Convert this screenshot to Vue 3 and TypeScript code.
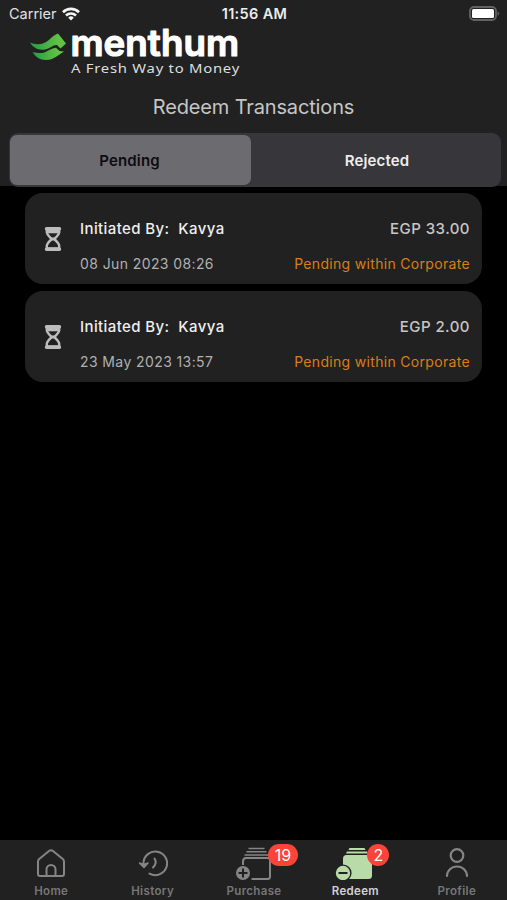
<script setup lang="ts">
import { ref } from 'vue'

interface Transaction {
  id: number
  initiatedBy: string
  date: string
  amount: string
  status: string
}

interface Tab {
  name: string
  badge?: number
}

const segments = ['Pending', 'Rejected']
const segment = ref('Pending')
const activeTab = ref('Redeem')

const transactions: Transaction[] = [
  { id: 1, initiatedBy: 'Kavya', date: '08 Jun 2023 08:26', amount: 'EGP 33.00', status: 'Pending within Corporate' },
  { id: 2, initiatedBy: 'Kavya', date: '23 May 2023 13:57', amount: 'EGP 2.00', status: 'Pending within Corporate' },
]

const tabs: Tab[] = [
  { name: 'Home' },
  { name: 'History' },
  { name: 'Purchase', badge: 19 },
  { name: 'Redeem', badge: 2 },
  { name: 'Profile' },
]
</script>

<template>
  <div class="screen">
    <header class="header">
      <div class="status">
        <div class="carrier">
          <span>Carrier</span>
          <svg class="wifi" width="18" height="14" viewBox="0 0 18 14">
            <g fill="none" stroke="#f4f4f4" stroke-width="2.6">
              <path d="M1 5.2a11.4 11.4 0 0 1 16 0" />
              <path d="M4 8.5a7.2 7.2 0 0 1 10 0" />
            </g>
            <path d="M9 13.5 6.2 10.7a4 4 0 0 1 5.6 0z" fill="#f4f4f4" />
          </svg>
        </div>
        <span class="time">11:56 AM</span>
        <svg class="battery" width="31" height="16" viewBox="0 0 31 16">
          <rect x="1" y="1" width="26" height="13" rx="4" fill="none" stroke="#626262" stroke-width="1.8" />
          <rect x="3" y="3" width="22" height="9" rx="1.500" fill="#fff" />
          <path d="M28.500 5.200q3.400 2.300 0 4.600z" fill="#626262" />
        </svg>
      </div>
      <svg class="logo" width="214" height="52" viewBox="0 0 214 52" role="img" aria-label="menthum">
        <defs>
          <linearGradient id="leaf" x1="0" y1="0" x2="1" y2="0">
            <stop offset="0" stop-color="#239c42" />
            <stop offset="0.8" stop-color="#62c244" />
          </linearGradient>
        </defs>
        <path d="M0 15.500c5 2.200 10 2.200 14 .5 6-2.500 8-7.500 14-9.500l8 10-5.500 5-3.500-3.500c-4-.5-7 3.500-12 4.500C8.500 23.500 3 21 0 15.500z" fill="url(#leaf)" />
        <path d="M2.500 25c5 1.500 9.500 1.500 13-.1 4-1.800 7-4.200 10.500-4.200l3.500 3.300 4.500.5-6 4c-3.500 2.500-7 4.500-12.500 4.500-5.500 0-10-2.700-13-8z" fill="url(#leaf)" />
        <text class="wordmark" x="40.500" y="28.500" textLength="168.500" lengthAdjust="spacingAndGlyphs">menthum</text>
        <text class="tagline" x="41" y="46" textLength="169" lengthAdjust="spacingAndGlyphs">A Fresh Way to Money</text>
      </svg>
      <h1 class="title">Redeem Transactions</h1>
      <div class="segmented">
        <button
          v-for="name in segments"
          :key="name"
          class="segment"
          :class="{ selected: segment === name }"
          @click="segment = name"
        >{{ name }}</button>
      </div>
    </header>

    <main class="list">
      <article v-for="item in transactions" :key="item.id" class="card">
        <svg class="hourglass" width="18" height="26" viewBox="0 0 18 26">
          <path d="M2.500 2.700h13M2.500 23.300h13" stroke="#bcbcbc" stroke-width="3.400" stroke-linecap="round" />
          <path d="M2.800 3.500v2.700q0 2.300 5 6.800-5 4.500-5 6.800v2.700h12.400v-2.700q0-2.300-5-6.800 5-4.500 5-6.800V3.500" fill="none" stroke="#bcbcbc" stroke-width="2.400" />
          <path d="M3 3h12v4.300H3z" fill="#bcbcbc" />
          <path d="M7.800 11.500h2.400v3H7.800z" fill="#bcbcbc" />
        </svg>
        <div class="details">
          <div class="row">
            <span class="initiator">Initiated By:&nbsp; {{ item.initiatedBy }}</span>
            <span class="amount">{{ item.amount }}</span>
          </div>
          <div class="row">
            <span class="date">{{ item.date }}</span>
            <span class="state">{{ item.status }}</span>
          </div>
        </div>
      </article>
    </main>

    <nav class="tabs">
      <button
        v-for="tab in tabs"
        :key="tab.name"
        class="tab"
        :class="{ active: activeTab === tab.name }"
        @click="activeTab = tab.name"
      >
        <span class="icon">
          <svg v-if="tab.name === 'Home'" width="30" height="30" viewBox="0 0 30 30" fill="none" stroke="currentColor" stroke-width="2" stroke-linejoin="round">
            <path d="M2 13.500q0-1.500 1.200-2.500L13 3q2-1.600 4 0l9.800 8q1.200 1 1.200 2.500V26q0 2-2 2H4q-2 0-2-2z" />
            <path d="M10.500 28v-6.500a4.500 4.500 0 0 1 9 0V28" />
          </svg>
          <svg v-else-if="tab.name === 'History'" width="30" height="30" viewBox="0 0 30 30" fill="none" stroke="currentColor" stroke-width="2" stroke-linecap="round" stroke-linejoin="round">
            <path d="M5.500 17v-2A11.800 11.800 0 1 1 11.500 25.600" />
            <path d="M1.500 15 6 19.500l4-4.500-4 1.500z" fill="currentColor" stroke-width="1.500" />
            <path d="M16.500 10.500q3 4.500-1.500 9" />
          </svg>
          <svg v-else-if="tab.name === 'Purchase'" width="36" height="34" viewBox="0 0 36 34" fill="none" stroke="currentColor" stroke-width="2">
            <path d="M12.500 2.500h16M10.500 5.700h20M8.500 9h24" stroke-width="1.600" />
            <path d="M7 19v-3.500q0-3.500 3-3.500h22q2 0 2 2.500v16q0 2.500-2.500 2.500H15.500" />
            <circle cx="7" cy="27" r="7" fill="currentColor" stroke="none" />
            <path d="M7 22.500v9M2.500 27h9" stroke="#212121" />
          </svg>
          <svg v-else-if="tab.name === 'Redeem'" class="redeem" width="38" height="34" viewBox="0 0 38 34" fill="none">
            <path d="M14.500 2h15l1 2h-17zM12 5.500h20l1 2H11z" fill="#b8dba8" />
            <rect x="8" y="9" width="29" height="24" rx="3.500" fill="#b8dba8" />
            <circle cx="8" cy="27" r="8.600" fill="#212121" />
            <circle cx="8" cy="27" r="7.200" fill="#b8dba8" />
            <path d="M3.500 27h9" stroke="#212121" stroke-width="2" />
          </svg>
          <svg v-else width="24" height="32" viewBox="0 0 24 32" fill="none" stroke="currentColor" stroke-width="2.200" stroke-linecap="round">
            <circle cx="12" cy="8.500" r="6.300" />
            <path d="M2 29a10 9.500 0 0 1 20 0" />
          </svg>
          <span v-if="tab.badge" class="badge" :class="{ wide: tab.badge > 9 }">{{ tab.badge }}</span>
        </span>
        <span class="label">{{ tab.name }}</span>
      </button>
    </nav>
  </div>
</template>

<style>
body {
  background: #000;
}
</style>

<style scoped>
.screen {
  display: flex;
  flex-direction: column;
  width: 507px;
  height: 900px;
  overflow: hidden;
  background: #000;
  font-family: Inter, 'Liberation Sans', sans-serif;
}
button {
  margin: 0;
  padding: 0;
  border: 0;
  background: none;
  font: inherit;
}
.header {
  flex: none;
  display: flex;
  flex-direction: column;
  height: 186px;
  background: #212121;
}
.status {
  display: grid;
  grid-template-columns: 1fr auto 1fr;
  align-items: center;
  height: 27px;
  padding: 0 7px 0 9px;
  color: #e2e2e2;
  font-size: 14.500px;
  line-height: 27px;
}
.carrier {
  display: flex;
  align-items: center;
  gap: 5px;
}
.time {
  color: #ececec;
  font-weight: 600;
  letter-spacing: 0.35px;
}
.battery {
  justify-self: end;
}
.logo {
  flex: none;
  display: block;
  margin-left: 30px;
  overflow: visible;
}
.wordmark {
  font: 600 37px Inter, sans-serif;
  fill: #fff;
  stroke: #fff;
  stroke-width: 1.2px;
  stroke-linejoin: round;
}
.tagline {
  font: 400 12px 'Noto Sans', sans-serif;
  letter-spacing: 0.6px;
  fill: #dedede;
}
.title {
  margin: 16px 0 0;
  color: #c6c6c6;
  font-size: 20px;
  font-weight: 400;
  line-height: 25px;
  letter-spacing: -0.15px;
  text-align: center;
}
.segmented {
  flex: none;
  display: grid;
  grid-template-columns: 241px 1fr;
  height: 54px;
  margin: 13px 6px 0 9px;
  padding: 2px 0 2px 1px;
  box-sizing: border-box;
  border-radius: 9px;
  background: #37363b;
}
.segment {
  border-radius: 7px;
  color: #ededed;
  font-size: 15px;
  font-weight: 600;
  letter-spacing: 0.15px;
}
.segment:last-child {
  padding-left: 2px;
}
.segment.selected {
  padding-right: 2px;
  background: #6c6b70;
  color: #0c0c10;
}
.list {
  flex: 1;
  display: flex;
  flex-direction: column;
  gap: 7px;
  padding: 7px 25px 0;
}
.card {
  display: flex;
  align-items: center;
  height: 91px;
  padding: 0 12px 0 19px;
  box-sizing: border-box;
  border-radius: 18px;
  background: #212121;
}
.hourglass {
  flex: none;
}
.details {
  flex: 1;
  display: flex;
  flex-direction: column;
  gap: 15px;
  margin-left: 18px;
  padding-top: 15px;
}
.row {
  display: flex;
  justify-content: space-between;
  line-height: 20px;
  font-size: 14px;
  white-space: nowrap;
}
.initiator {
  color: #efefef;
  font-size: 15px;
  font-weight: 500;
  letter-spacing: 0.4px;
}
.amount {
  color: #c6c6c6;
  font-size: 15px;
  font-weight: 500;
  letter-spacing: 0.45px;
}
.date {
  color: #b0b0b0;
  letter-spacing: 0.4px;
}
.state {
  color: #da7e15;
  letter-spacing: 0.32px;
}
.tabs {
  flex: none;
  display: grid;
  grid-template-columns: repeat(5, 1fr);
  height: 60px;
  background: #212121;
}
.tab {
  display: flex;
  flex-direction: column;
  align-items: center;
  justify-content: flex-start;
  padding-left: 1px;
  color: #858585;
}
.icon {
  position: relative;
  display: flex;
  align-items: center;
  justify-content: center;
  height: 44px;
  padding-top: 1px;
  box-sizing: content-box;
}
.redeem {
  margin-right: 2px;
}
.label {
  color: #777;
  font-size: 11.500px;
  font-weight: 600;
  line-height: 12px;
  letter-spacing: 0.35px;
}
.active .label {
  color: #d2d2d2;
}
.badge {
  position: absolute;
  top: 4px;
  left: 32px;
  width: 22px;
  height: 22px;
  border-radius: 11px;
  background: #fb4439;
  color: #fff;
  font-size: 16px;
  line-height: 22px;
  text-align: center;
}
.badge.wide {
  width: 30px;
}
</style>
